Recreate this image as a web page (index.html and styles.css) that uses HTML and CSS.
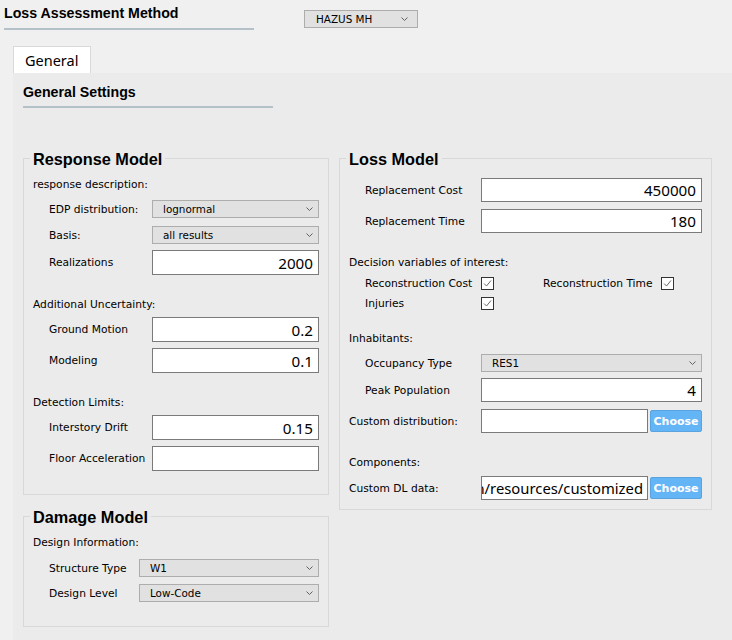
FILE: index.html
```html
<!DOCTYPE html>
<html>
<head>
<meta charset="utf-8">
<link rel="stylesheet" href="styles.css">
</head>
<body>
<div class="window">
  <header class="top">
    <div class="method-title">Loss Assessment Method</div>
    <div class="combo combo-method"><span>HAZUS MH</span><svg class="chev" width="7" height="4" viewBox="0 0 7 4"><polyline points="0.5,0.5 3.5,3.5 6.5,0.5" fill="none" stroke="#606060" stroke-width="1"/></svg></div>
  </header>
  <div class="tabs"><div class="tab">General</div></div>
  <div class="pane">
    <div class="section-title">General Settings</div>
    <div class="columns">
      <div class="col col-left">
        <section class="group group-response">
          <div class="group-title">Response Model</div>
          <div class="sub mt8">response description:</div>
          <div class="row mt8"><span class="lbl">EDP distribution:</span><div class="combo"><span>lognormal</span><svg class="chev" width="7" height="4" viewBox="0 0 7 4"><polyline points="0.5,0.5 3.5,3.5 6.5,0.5" fill="none" stroke="#606060" stroke-width="1"/></svg></div></div>
          <div class="row mt8"><span class="lbl">Basis:</span><div class="combo"><span>all results</span><svg class="chev" width="7" height="4" viewBox="0 0 7 4"><polyline points="0.5,0.5 3.5,3.5 6.5,0.5" fill="none" stroke="#606060" stroke-width="1"/></svg></div></div>
          <div class="row mt6"><span class="lbl">Realizations</span><div class="input">2000</div></div>
          <div class="sub mt23">Additional Uncertainty:</div>
          <div class="row mt5"><span class="lbl">Ground Motion</span><div class="input">0.2</div></div>
          <div class="row mt6"><span class="lbl">Modeling</span><div class="input">0.1</div></div>
          <div class="sub mt23">Detection Limits:</div>
          <div class="row mt5"><span class="lbl">Interstory Drift</span><div class="input">0.15</div></div>
          <div class="row mt6"><span class="lbl">Floor Acceleration</span><div class="input"></div></div>
        </section>
        <section class="group group-damage">
          <div class="group-title">Damage Model</div>
          <div class="sub mt8">Design Information:</div>
          <div class="row mt9"><span class="lbl">Structure Type</span><div class="combo"><span>W1</span><svg class="chev" width="7" height="4" viewBox="0 0 7 4"><polyline points="0.5,0.5 3.5,3.5 6.5,0.5" fill="none" stroke="#606060" stroke-width="1"/></svg></div></div>
          <div class="row mt7"><span class="lbl">Design Level</span><div class="combo"><span>Low-Code</span><svg class="chev" width="7" height="4" viewBox="0 0 7 4"><polyline points="0.5,0.5 3.5,3.5 6.5,0.5" fill="none" stroke="#606060" stroke-width="1"/></svg></div></div>
        </section>
      </div>
      <div class="col col-right">
        <section class="group group-loss">
          <div class="group-title">Loss Model</div>
          <div class="row mt8"><span class="lbl">Replacement Cost</span><div class="input">450000</div></div>
          <div class="row mt7"><span class="lbl">Replacement Time</span><div class="input">180</div></div>
          <div class="sub mt23">Decision variables of interest:</div>
          <div class="check-row mt3">
            <span class="lbl">Reconstruction Cost</span>
            <span class="check"><svg width="11" height="11" viewBox="0 0 11 11"><polyline points="2,5.5 4.5,8 9,2.5" fill="none" stroke="#6a6a6a" stroke-width="1"/></svg></span>
            <span class="lbl lbl2">Reconstruction Time</span>
            <span class="check"><svg width="11" height="11" viewBox="0 0 11 11"><polyline points="2,5.5 4.5,8 9,2.5" fill="none" stroke="#6a6a6a" stroke-width="1"/></svg></span>
          </div>
          <div class="check-row">
            <span class="lbl">Injuries</span>
            <span class="check"><svg width="11" height="11" viewBox="0 0 11 11"><polyline points="2,5.5 4.5,8 9,2.5" fill="none" stroke="#6a6a6a" stroke-width="1"/></svg></span>
          </div>
          <div class="sub mt19">Inhabitants:</div>
          <div class="row mt8"><span class="lbl">Occupancy Type</span><div class="combo"><span>RES1</span><svg class="chev" width="7" height="4" viewBox="0 0 7 4"><polyline points="0.5,0.5 3.5,3.5 6.5,0.5" fill="none" stroke="#606060" stroke-width="1"/></svg></div></div>
          <div class="row mt6"><span class="lbl">Peak Population</span><div class="input">4</div></div>
          <div class="row row-flat mt7"><span class="lbl">Custom distribution:</span><div class="input input-file"></div><button class="choose">Choose</button></div>
          <div class="sub mt23">Components:</div>
          <div class="row row-flat mt6"><span class="lbl">Custom DL data:</span><div class="input input-file input-path"><span>n/resources/customized</span></div><button class="choose">Choose</button></div>
        </section>
      </div>
    </div>
  </div>
</div>
</body>
</html>
```

FILE: styles.css
```css
* { box-sizing: border-box; }
html, body { margin: 0; padding: 0; }
body {
  background: #f0f0f0;
  font-family: "DejaVu Sans", sans-serif;
  font-size: 10.7px;
  color: #000;
  width: 732px;
  height: 640px;
  overflow: hidden;
}
.window { width: 732px; height: 640px; }

.top {
  display: flex;
  align-items: flex-start;
  height: 46px;
  padding-left: 4px;
}
.method-title {
  width: 250px;
  font-family: "Liberation Sans", sans-serif;
  font-weight: bold;
  font-size: 14.2px;
  line-height: 16px;
  padding-top: 5px;
  padding-bottom: 7px;
  border-bottom: 2px solid #b5c1c9;
}
.combo {
  display: flex;
  align-items: center;
  justify-content: space-between;
  height: 18px;
  flex: 1;
  background: #e1e1e1;
  border: 1px solid #adadad;
  padding: 0 5px 0 10px;
  font-size: 10.4px;
  white-space: nowrap;
}
.combo .chev { flex: none; }
.combo-method {
  flex: none;
  width: 114px;
  margin-left: 50px;
  margin-top: 10px;
  padding: 0 9px 0 11px;
}

.tabs { padding-left: 13px; height: 27px; display: flex; }
.tab {
  width: 78px;
  height: 27px;
  background: #fff;
  border: 1px solid #d9d9d9;
  border-bottom: none;
  font-family: "Noto Sans", sans-serif;
  font-size: 14.5px;
  display: flex;
  align-items: center;
  padding-left: 11px;
  padding-bottom: 1px;
}

.pane {
  margin-left: 13px;
  height: 567px;
  background: #ebebeb;
  padding-left: 10px;
}
.section-title {
  width: 250px;
  padding-top: 11px;
  font-family: "Liberation Sans", sans-serif;
  font-weight: bold;
  font-size: 14.2px;
  line-height: 16px;
  padding-bottom: 6px;
  border-bottom: 2px solid #b5c1c9;
}
.columns {
  display: flex;
  align-items: flex-start;
  gap: 10px;
  margin-top: 50px;
}
.col-left { width: 306px; display: flex; flex-direction: column; gap: 21px; }
.col-right { width: 373px; }

.group {
  border: 1px solid #d8d8d8;
  padding: 0 9px;
}
.group-response { padding-bottom: 23px; }
.group-damage { padding-bottom: 24px; }
.group-loss { padding-bottom: 9px; }
.group-title {
  width: fit-content;
  margin: -11px 0 0 -3px;
  padding: 0 3px;
  background: #ebebeb;
  font-family: "Liberation Sans", sans-serif;
  font-weight: bold;
  font-size: 16.3px;
  line-height: 22px;
}
.sub { line-height: 14px; white-space: nowrap; }

.row {
  display: flex;
  align-items: center;
  padding-left: 16px;
  white-space: nowrap;
}
.row .lbl { flex: none; width: 103px; }
.group-damage .row .lbl { width: 90px; }
.group-loss .row .lbl { width: 116px; }
.group-loss .row-flat { padding-left: 0; }
.group-loss .row-flat .lbl { width: 132px; }

.input {
  flex: 1;
  height: 25px;
  background: #fff;
  border: 1px solid #7a7a7a;
  font-family: "Noto Sans", sans-serif;
  font-size: 15.2px;
  display: flex;
  align-items: center;
  justify-content: flex-end;
  padding-right: 5px;
  overflow: hidden;
  white-space: nowrap;
}
.group-loss .input { height: 24px; }
.input-file { flex: none; width: 167px; padding-right: 4px; }
.input-path { font-size: 14.8px; }
.choose {
  flex: none;
  width: 52px;
  height: 22px;
  margin-left: 2px;
  background: #64b5f6;
  border: 1px solid #58a3e0;
  border-radius: 2px;
  color: #fff;
  font-family: "DejaVu Sans", sans-serif;
  font-weight: bold;
  font-size: 11px;
  padding: 0;
}

.check-row {
  display: flex;
  align-items: center;
  height: 20px;
  padding-left: 16px;
  white-space: nowrap;
}
.check-row .lbl { width: 116px; flex: none; }
.check-row .lbl2 { width: 118px; margin-left: 49px; }
.check {
  flex: none;
  width: 13px;
  height: 13px;
  border: 1px solid #333;
  background: #fff;
  display: flex;
  align-items: center;
  justify-content: center;
}

.mt3 { margin-top: 3px; }
.mt5 { margin-top: 5px; }
.mt6 { margin-top: 6px; }
.mt7 { margin-top: 7px; }
.mt8 { margin-top: 8px; }
.mt9 { margin-top: 9px; }
.mt19 { margin-top: 19px; }
.mt23 { margin-top: 23px; }
```
